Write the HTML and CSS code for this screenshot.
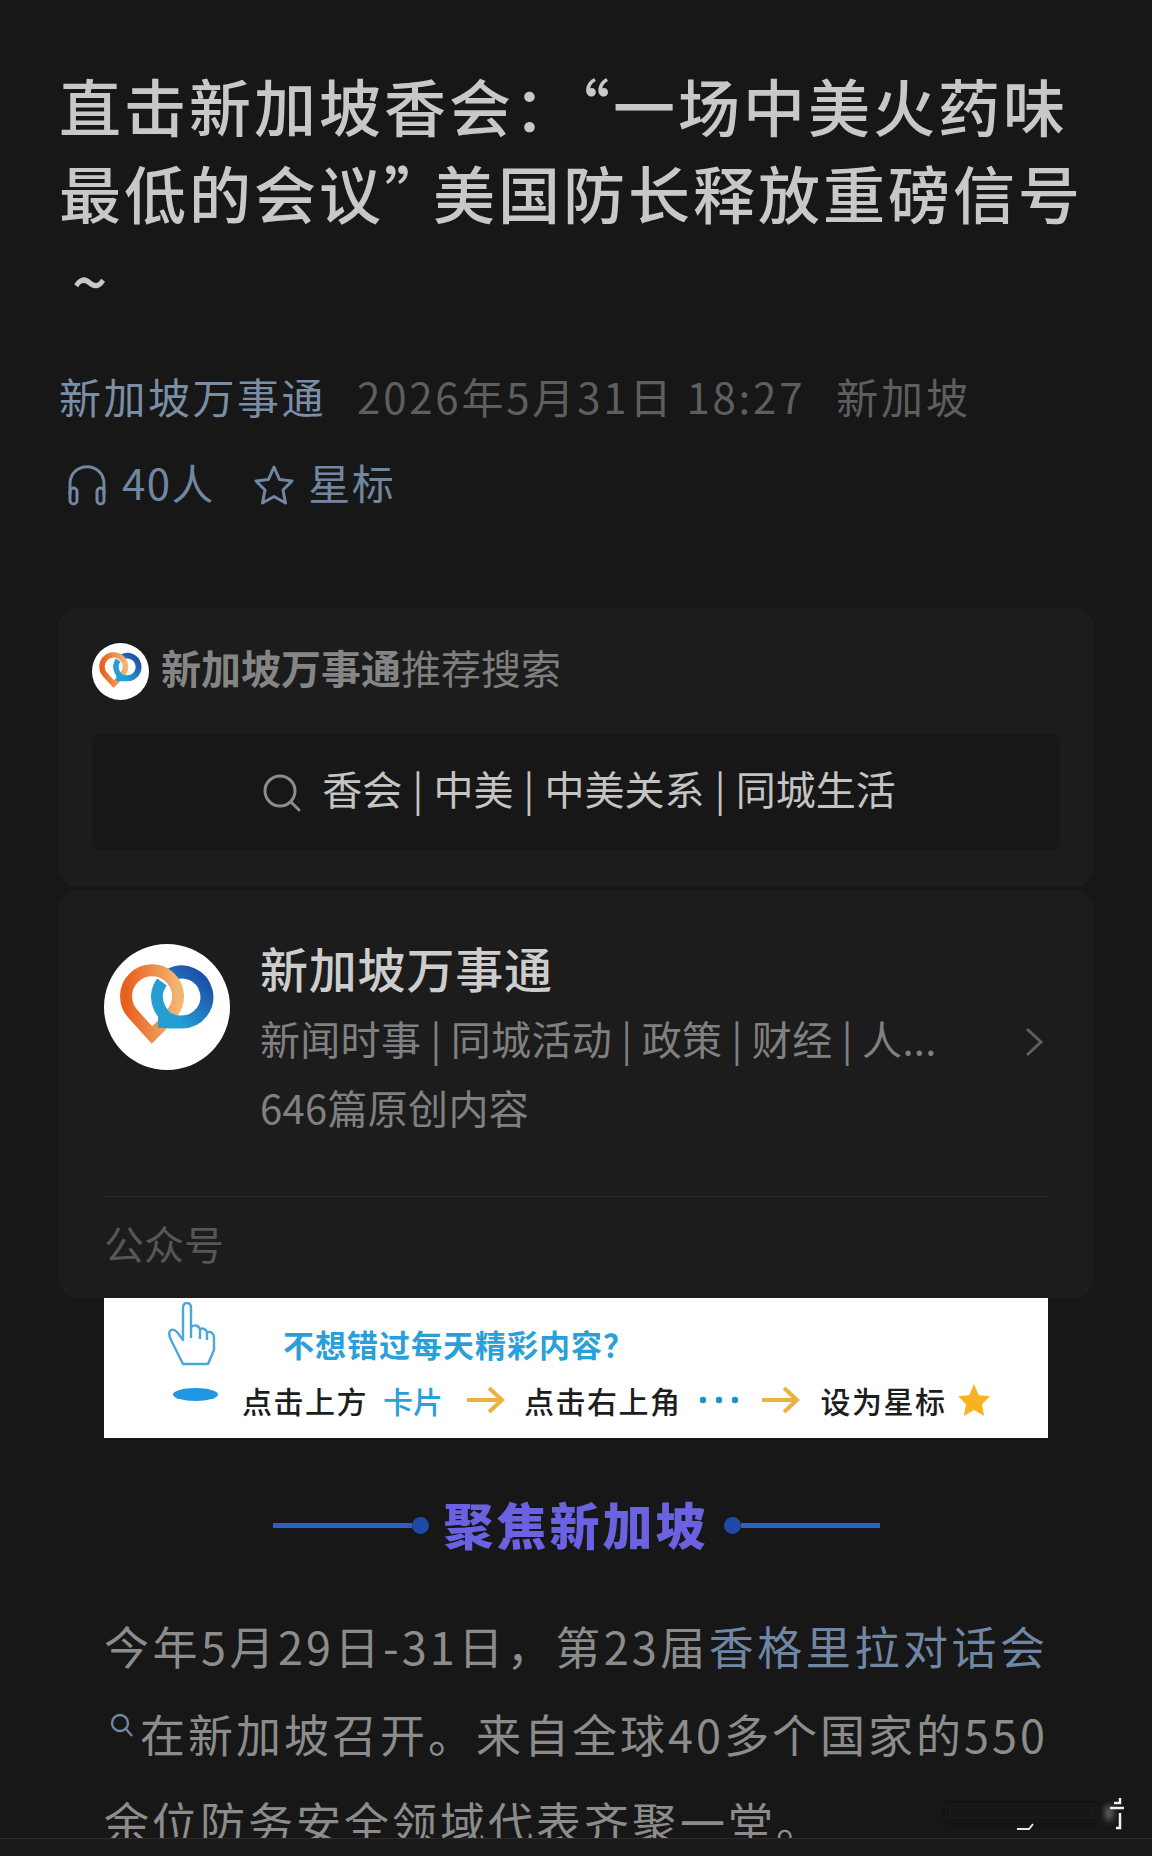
FILE: index.html
```html
<!DOCTYPE html>
<html lang="zh-CN">
<head>
  <meta charset="UTF-8">
  <title>直击新加坡香会</title>
  <link rel="stylesheet" href="styles.css">
</head>
<body>
  <svg class="defs" width="0" height="0">
    <defs>
      <linearGradient id="orange" x1="0" y1="0" x2="1" y2="0">
        <stop offset="0" stop-color="#e8601f"/>
        <stop offset="1" stop-color="#f2b673"/>
      </linearGradient>
      <linearGradient id="blue" x1="1" y1="0" x2="0" y2="1">
        <stop offset="0" stop-color="#1b46a3"/>
        <stop offset="1" stop-color="#27b5de"/>
      </linearGradient>
      <symbol id="logo" viewBox="0 0 126 126">
        <circle cx="63" cy="63" r="63" fill="#fff"/>
        <path d="M66 31 A25 25 0 1 1 78 78 H54" fill="none" stroke="url(#blue)" stroke-width="13"/>
        <path d="M58 81 L48 91 L29 70 A26 26 0 1 1 68 69" fill="none" stroke="url(#orange)" stroke-width="12"/>
        <path d="M58 38 A25 25 0 0 0 78 78 H54" fill="none" stroke="#259fd3" stroke-width="12"/>
      </symbol>
    </defs>
  </svg>

  <main class="page">
    <h1 class="title">直击新加坡香会：“一场中美火药味<br>最低的会议<span class="quote">”</span>美国防长释放重磅信号<br><span class="tilde">~</span></h1>

    <div class="meta">
      <span class="author">新加坡万事通</span>
      <span class="date">2026年5月31日 18:27</span>
      <span class="place">新加坡</span>
    </div>
    <div class="meta-actions">
      <svg class="icon-phones" viewBox="0 0 40 42" fill="none" stroke="#7186a0" stroke-width="3">
        <path d="M3 31 V20 C3 -3 37 -3 37 20 V31"/>
        <rect x="3" y="24" width="7" height="16" rx="3.5"/>
        <rect x="30" y="24" width="7" height="16" rx="3.5"/>
      </svg>
      <span class="count">40人</span>
      <svg class="icon-star" viewBox="0 0 42 42" fill="none" stroke="#7186a0" stroke-width="3" stroke-linejoin="round">
        <path d="M21 3 L26.5 15.5 L39 17 L30 26 L32.5 39 L21 32.5 L9.5 39 L12 26 L3 17 L15.5 15.5 Z"/>
      </svg>
      <span>星标</span>
    </div>

    <section class="card card-search">
      <div class="search-head">
        <svg class="logo-small"><use href="#logo"/></svg>
        <span class="search-label"><b>新加坡万事通</b>推荐搜索</span>
      </div>
      <div class="search-box">
        <svg class="icon-search" viewBox="0 0 40 40" fill="none" stroke="#8c8c8c" stroke-width="3" stroke-linecap="round">
          <circle cx="18" cy="18" r="15"/>
          <path d="M29 29 L37 37"/>
        </svg>
        <span class="search-words">香会 | 中美 | 中美关系 | 同城生活</span>
      </div>
    </section>

    <section class="card card-account">
      <div class="account">
        <svg class="logo-big"><use href="#logo"/></svg>
        <div class="account-text">
          <div class="account-name">新加坡万事通</div>
          <div class="account-desc">新闻时事 | 同城活动 | 政策 | 财经 | 人...</div>
          <div class="account-desc">646篇原创内容</div>
        </div>
        <svg class="chevron" viewBox="0 0 20 32" fill="none" stroke="#5f5f5f" stroke-width="3">
          <path d="M3 3 L17 16 L3 29"/>
        </svg>
      </div>
      <div class="account-foot">公众号</div>
    </section>

    <div class="banner">
      <svg class="hand" viewBox="0 0 50 64" fill="#fff" stroke="#4aa8d8" stroke-width="2.4" stroke-linejoin="round">
        <path d="M17 62 L6 40 Q1 31 5 28 Q9 26 14 34 L17 38 V6 Q17 1 21 1 Q25 1 25 6 V25 Q31 21 34 27 Q39 25 41 30 Q47 29 48 35 V48 L42 62 Z"/>
        <path d="M25 25 V36 M34 27 V37 M41 30 V38"/>
      </svg>
      <div class="banner-ask">不想错过每天精彩内容？</div>
      <div class="banner-steps">
        <span class="blue-dot"></span>
        <span class="step">点击上方</span>
        <span class="step step-blue">卡片</span>
        <svg class="arrow" viewBox="0 0 38 30" fill="none" stroke="#eab23e" stroke-width="4"><path d="M0 15 H34 M22 3 L35 15 L22 27"/></svg>
        <span class="step">点击右上角</span>
        <svg class="dots" viewBox="0 0 40 8" fill="#1f8fc8"><circle cx="4" cy="4" r="3.2"/><circle cx="20" cy="4" r="3.2"/><circle cx="36" cy="4" r="3.2"/></svg>
        <svg class="arrow" viewBox="0 0 38 30" fill="none" stroke="#eab23e" stroke-width="4"><path d="M0 15 H34 M22 3 L35 15 L22 27"/></svg>
        <span class="step">设为星标</span>
        <svg class="gold-star" viewBox="0 0 32 32" fill="#f6b21f"><path d="M16 1 L20.5 11.5 L31 12.5 L23.5 20 L25.5 31 L16 25.5 L6.5 31 L8.5 20 L1 12.5 L11.5 11.5 Z"/></svg>
      </div>
    </div>

    <div class="focus">
      <span class="focus-line"></span>
      <span class="focus-dot"></span>
      <span class="focus-text">聚焦新加坡</span>
      <span class="focus-dot"></span>
      <span class="focus-line"></span>
    </div>

    <p class="body-text">今年5月29日-31日，第23届<span class="link">香格里拉对话会</span><svg class="icon-link" viewBox="0 0 24 24" fill="none" stroke="#6f87a5" stroke-width="2.4"><circle cx="10" cy="10" r="8"/><path d="M16 16 L22 23"/></svg>在新加坡召开。来自全球40多个国家的550余位防务安全领域代表齐聚一堂。</p>
  </main>
  <div class="bottom-bar"></div>
  <svg class="smudge" viewBox="0 0 190 40">
    <defs>
      <filter id="soft" x="-100%" y="-100%" width="300%" height="300%"><feGaussianBlur stdDeviation="3"/></filter>
    </defs>
    <rect x="10" y="12" width="150" height="16" fill="#121212" filter="url(#soft)"/>
    <ellipse cx="172" cy="20" rx="4" ry="8" fill="#6a6a6a" filter="url(#soft)"/>
    <path d="M80 36 H92 L96 31" fill="none" stroke="#e8e8e8" stroke-width="2"/>
    <path d="M183 5 V10 H177 M173 15 H187 M183 20 V35 H179" fill="none" stroke="#f0f0f0" stroke-width="2.5"/>
  </svg>
</body>
</html>
```
FILE: styles.css
```css
* {
  margin: 0;
  padding: 0;
  box-sizing: border-box;
}

body {
  background-color: #171717;
  font-family: "Noto Sans CJK SC", "Noto Sans", sans-serif;
  height: 1856px;
  overflow: hidden;
  position: relative;
}

.defs {
  position: absolute;
}

.page {
  height: 1838px;
  overflow: hidden;
}

.title {
  padding: 62px 0 0 59px;
  font-size: 62px;
  font-weight: 500;
  line-height: 87px;
  letter-spacing: 3px;
  color: #c8c8c8;
  white-space: nowrap;
}

.quote {
  letter-spacing: -13px;
}

.tilde {
  margin-left: 13px;
}

.meta {
  margin-top: 46px;
  padding: 0 0 7px 59px;
  display: flex;
  gap: 31px;
  height: 60px;
  align-items: center;
  font-size: 42px;
  letter-spacing: 2.8px;
  color: #5e5e5e;
  white-space: nowrap;
}

.author {
  color: #7b8ea8;
  letter-spacing: 2.5px;
}

.meta-actions {
  margin-top: 26px;
  padding: 0 0 7px 67px;
  display: flex;
  align-items: center;
  height: 60px;
  font-size: 42px;
  letter-spacing: 1.5px;
  color: #7186a0;
}

.icon-phones {
  width: 40px;
  height: 42px;
  margin: 7px 15px 0 0;
}

.icon-star {
  width: 42px;
  height: 42px;
  margin: 7px 13px 0 38px;
}

.card {
  margin: 0 58px;
  background-color: #1c1c1c;
  border-radius: 20px;
}

.card-search {
  margin-top: 93px;
  padding: 35px 34px 36px;
}

.search-head {
  display: flex;
  align-items: center;
  gap: 12px;
  height: 57px;
  font-size: 40px;
  color: #7f7f7f;
}

.search-label {
  padding-bottom: 9px;
}

.search-head b {
  font-weight: 700;
  color: #858585;
}

.logo-small {
  width: 57px;
  height: 57px;
}

.search-box {
  margin-top: 33px;
  padding-left: 6px;
  height: 118px;
  background-color: #171717;
  border-radius: 10px;
  display: flex;
  align-items: center;
  justify-content: center;
  gap: 20px;
  font-size: 40px;
  word-spacing: 1.2px;
  color: #c4c4c4;
}

.search-words {
  padding-bottom: 9px;
}

.icon-search {
  width: 40px;
  height: 40px;
  margin-top: 2px;
}

.card-account {
  margin-top: 3px;
  padding: 42px 46px 27px;
}

.account {
  display: flex;
  align-items: flex-start;
  padding-bottom: 55px;
  border-bottom: 1px solid #2a2a2a;
  position: relative;
}

.logo-big {
  width: 126px;
  height: 126px;
  margin-top: 12px;
  flex: none;
}

.account-text {
  margin-left: 30px;
}

.account-name {
  font-size: 48px;
  line-height: 70px;
  font-weight: 500;
  letter-spacing: 0.8px;
  color: #cdcdcd;
}

.account-desc {
  margin-top: 2.5px;
  font-size: 40px;
  line-height: 67px;
  letter-spacing: 0.3px;
  color: #808080;
}

.chevron {
  position: absolute;
  right: 4px;
  top: 94px;
  width: 20px;
  height: 32px;
}

.account-foot {
  padding-top: 18px;
  font-size: 40px;
  line-height: 56px;
  color: #565656;
}

.banner {
  margin-left: 104px;
  width: 944px;
  height: 140px;
  background-color: #fff;
  position: relative;
  padding-top: 28px;
}

.hand {
  position: absolute;
  left: 61px;
  top: 4px;
  width: 52px;
  height: 64px;
}

.banner-ask {
  padding-left: 179px;
  font-size: 31px;
  line-height: 36px;
  font-weight: 700;
  letter-spacing: 1px;
  color: #2b9fd9;
}

.banner-steps {
  margin-top: 18px;
  padding-left: 69px;
  display: flex;
  align-items: center;
  height: 40px;
  font-size: 30px;
  font-weight: 500;
  color: #1d1d1d;
  white-space: nowrap;
}

.blue-dot {
  width: 45px;
  height: 13px;
  border-radius: 50%;
  background-color: #1e96e4;
  margin: -12px 24px 0 0;
}

.step {
  letter-spacing: 1.5px;
}

.step-blue {
  margin-left: 15px;
  color: #2b9fd9;
  letter-spacing: 0;
}

.arrow {
  width: 38px;
  height: 30px;
  margin: 0 19px 0 24px;
}

.dots {
  width: 42px;
  height: 8px;
  margin-left: 16px;
}

.banner-steps .dots + .arrow {
  margin: 0 21px 0 22px;
}

.gold-star {
  width: 34px;
  height: 34px;
  margin-left: 10px;
}

.focus {
  margin-top: 57px;
  height: 60px;
  display: flex;
  align-items: center;
  justify-content: center;
}

.focus-line {
  width: 139px;
  height: 5px;
  background-color: #2a62c4;
}

.focus-dot {
  width: 17px;
  height: 17px;
  border-radius: 50%;
  background-color: #1d4aa6;
}

.focus-text {
  margin: 0 15px;
  padding-bottom: 4px;
  font-size: 50px;
  font-weight: 900;
  letter-spacing: 3px;
  color: #6a62e0;
}

.body-text {
  margin: 47px 104px 0;
  font-size: 45px;
  line-height: 88px;
  letter-spacing: 3px;
  text-align: justify;
  color: #8c8c8c;
}

.link {
  color: #6f87a5;
}

.icon-link {
  width: 24px;
  height: 24px;
  margin: 0 6px 0 6px;
  vertical-align: 16px;
}

.bottom-bar {
  height: 18px;
  background-color: #1a1a1a;
  border-top: 1px solid #2b2b2b;
}

.smudge {
  position: absolute;
  left: 937px;
  top: 1793px;
  width: 190px;
  height: 40px;
}
```
